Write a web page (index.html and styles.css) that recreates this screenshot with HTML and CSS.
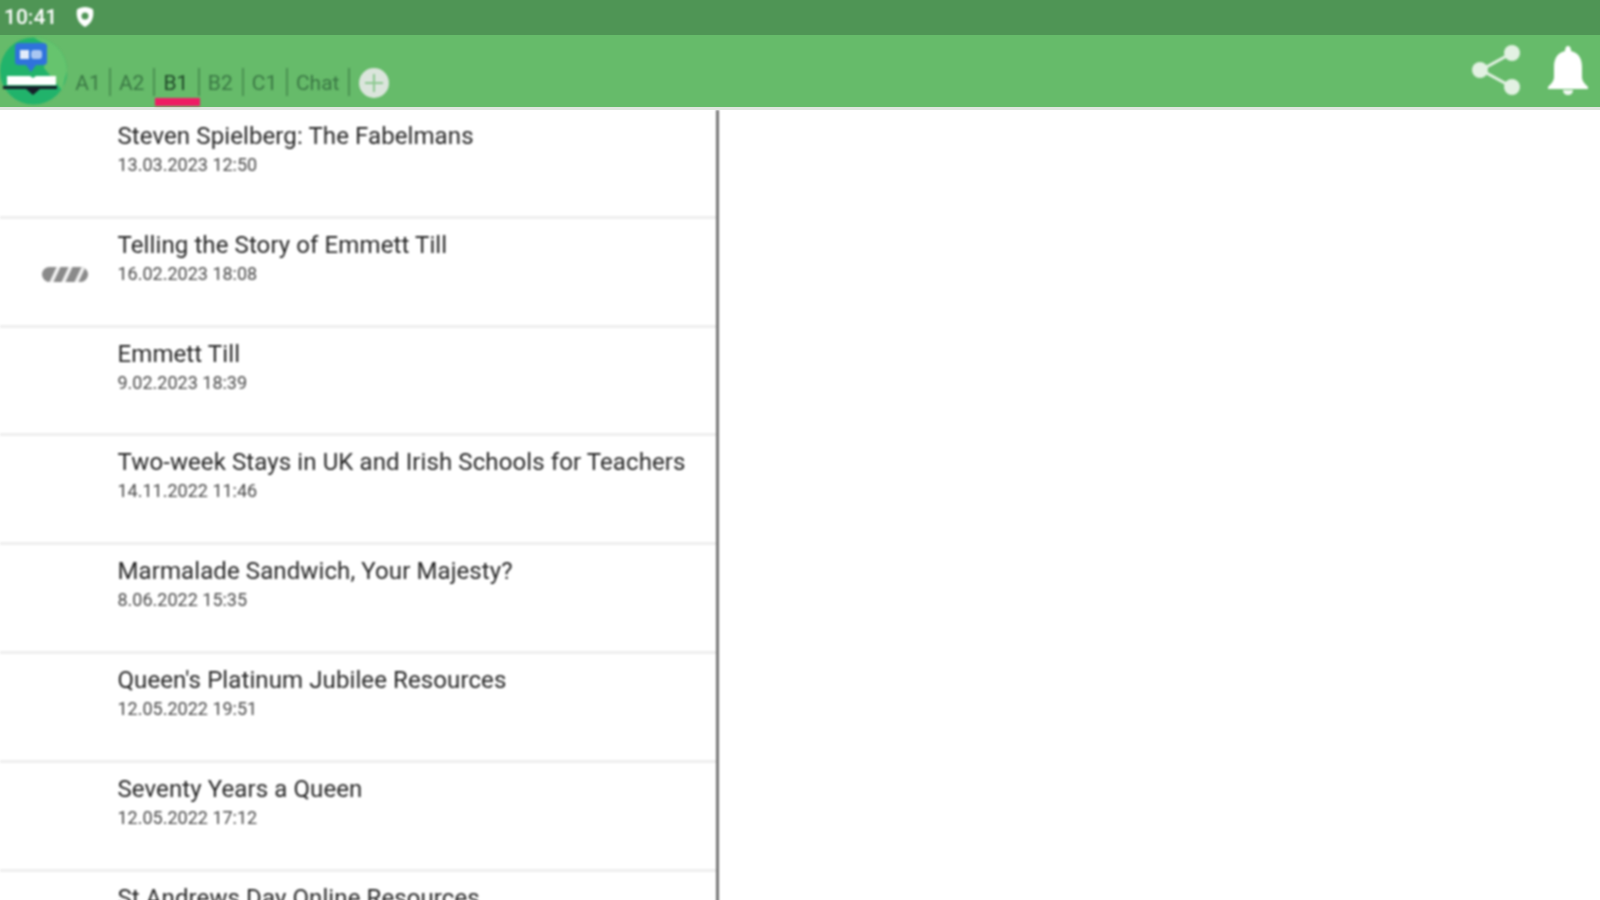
FILE: index.html
```html
<!DOCTYPE html>
<html lang="en">
<head>
<meta charset="utf-8">
<title>News list</title>
<link rel="stylesheet" href="styles.css">
</head>
<body>
<div class="app">
  <header class="status">
    <span class="time soft">10:41</span>
    <svg class="status-icon soft" viewBox="0 0 20 22"><path d="M10 1C13 1 16 2 18 3.500 19 9 18 17 10 21 2 17 1 9 2 3.500 4 2 7 1 10 1Z" fill="#fff"/><circle cx="10" cy="10" r="3.500" fill="#4f9555"/></svg>
  </header>
  <nav class="toolbar">
    <svg class="logo soft" viewBox="0 0 68 72">
      <circle cx="33.500" cy="36" r="33.500" fill="#21b36b"/>
      <path d="M33.500 2.500A33.500 33.500 0 0 1 67 36L62 55 44 33 47 10Z" fill="#66c46e"/>
      <path d="M19 8Q15 8 15 12V27Q15 30 19 30H26L31 37 36 30H43Q47 30 47 27V12Q47 8 43 8Z" fill="#2f73dc"/>
      <rect x="20" y="15" width="9" height="9" fill="#e3ecfa"/>
      <rect x="31" y="15" width="11" height="9" rx="3" fill="#a9c6f2"/>
      <path d="M7 41H30L33 43 36 41H56V50H7Z" fill="#fff"/>
      <path d="M3 51H57V54H40L33 60 26 54H3Z" fill="#16202a"/>
    </svg>
    <ul class="tabs soft">
      <li class="tab">A1</li>
      <li class="tab">A2</li>
      <li class="tab active">B1</li>
      <li class="tab">B2</li>
      <li class="tab">C1</li>
      <li class="tab">Chat</li>
    </ul>
    <svg class="add soft" viewBox="0 0 30 30"><circle cx="15" cy="15" r="15" fill="#dbe5dc"/><path d="M15 6V24M6 15H24" stroke="#8cc890" stroke-width="2"/></svg>
    <div class="actions soft">
      <svg class="share" viewBox="0 0 52 54"><path d="M42 10 11 27 42 44" fill="none" stroke="#e3f1e3" stroke-width="3"/><circle cx="42" cy="10" r="8" fill="#e3f1e3"/><circle cx="10" cy="27" r="8" fill="#e3f1e3"/><circle cx="42" cy="44" r="8" fill="#e3f1e3"/></svg>
      <svg class="bell" viewBox="0 0 42 50"><path d="M21 1C23 1 24 3 24 6 32 8 35 14 35 22V32C35 36 38 39 41 42V44H1V42C4 39 7 36 7 32V22C7 14 10 8 18 6 18 3 19 1 21 1Z" fill="#fff"/><path d="M16 45H26C26 48 24 50 21 50S16 48 16 45Z" fill="#f0f7f0"/></svg>
    </div>
  </nav>
  <main class="content">
    <section class="list soft">
      <article class="row"><div class="thumb"></div><div><h2 class="title">Steven Spielberg: The Fabelmans</h2><p class="date">13.03.2023 12:50</p></div></article>
      <article class="row"><div class="thumb"><span class="progress"><i></i><i></i><i></i></span></div><div><h2 class="title">Telling the Story of Emmett Till</h2><p class="date">16.02.2023 18:08</p></div></article>
      <article class="row"><div class="thumb"></div><div><h2 class="title">Emmett Till</h2><p class="date">9.02.2023 18:39</p></div></article>
      <article class="row"><div class="thumb"></div><div><h2 class="title">Two-week Stays in UK and Irish Schools for Teachers</h2><p class="date">14.11.2022 11:46</p></div></article>
      <article class="row"><div class="thumb"></div><div><h2 class="title">Marmalade Sandwich, Your Majesty?</h2><p class="date">8.06.2022 15:35</p></div></article>
      <article class="row"><div class="thumb"></div><div><h2 class="title">Queen's Platinum Jubilee Resources</h2><p class="date">12.05.2022 19:51</p></div></article>
      <article class="row"><div class="thumb"></div><div><h2 class="title">Seventy Years a Queen</h2><p class="date">12.05.2022 17:12</p></div></article>
      <article class="row"><div class="thumb"></div><div><h2 class="title">St Andrews Day Online Resources</h2><p class="date">30.11.2021 10:00</p></div></article>
    </section>
  </main>
</div>
</body>
</html>
```
FILE: styles.css
```css
* { box-sizing: border-box; }
html, body { margin: 0; height: 100%; overflow: hidden; background: #fff; }
.app {
  width: 1600px; height: 900px; display: flex; flex-direction: column;
  font-family: Roboto, "Liberation Sans", sans-serif; overflow: hidden;
}
.soft { filter: blur(0.8px); }
.status {
  height: 35px; flex: none; background: #4f9555; display: flex; align-items: center;
  padding: 0 0 2px 4px; color: #fff; font-size: 21px; font-weight: 500;
}
.time { width: 71px; }
.status-icon { width: 20px; height: 22px; }
.toolbar {
  height: 75px; flex: none; background: #66bb6a; display: flex; align-items: flex-start;
  border-bottom: 3px solid #dfe6df;
}
.logo { width: 68px; height: 72px; flex: none; }
.tabs { list-style: none; margin: 33px 0 0; padding: 0; display: flex; }
.tab {
  height: 38px; width: 44.300px; text-align: center; position: relative;
  font-size: 21px; line-height: 26px; color: #3a7744; padding: 2px 3px 0 0;
}
.tab:first-child { width: 43px; }
.tab::after {
  content: ""; position: absolute; right: 0; top: 0; width: 2px; height: 28px; background: #4c9152;
}
.tab:last-child { width: 62px; }
.tab.active { color: #1f4828; }
.tab.active::before {
  content: ""; position: absolute; left: 0; right: 0; top: 30px; height: 8px; background: #ee1c64;
}
.add { width: 30px; height: 30px; margin: 33px 0 0 9px; flex: none; }
.actions { margin-left: auto; display: flex; align-items: center; gap: 25px; padding: 8px 11px 0 0; }
.share { width: 52px; height: 54px; }
.bell { width: 42px; height: 50px; }
.content { flex: 1; min-height: 0; overflow: hidden; }
.list { width: 719px; height: calc(100% + 4px); border-right: 3px solid #757575; }
.row {
  height: 108.800px; display: flex; border-bottom: 3px solid #eeeeee; padding-top: 12px;
}
.thumb { width: 117.500px; flex: none; display: flex; align-items: center; justify-content: center; height: 88px; }
.title { margin: 0; font-size: 24px; letter-spacing: 0.100px; line-height: 28px; font-weight: 400; color: #262626; white-space: nowrap; }
.date { margin: 3px 0 0; font-size: 18px; line-height: 24px; color: #484848; white-space: nowrap; }
.progress {
  width: 46px; height: 15px; border-radius: 8px; background: #8a8a8a; display: flex;
  gap: 9px; padding: 0 6px 0 11px; overflow: hidden; margin-left: 12px;
}
.progress i { width: 4px; background: #f2f2f2; transform: skewX(-25deg); }
```
